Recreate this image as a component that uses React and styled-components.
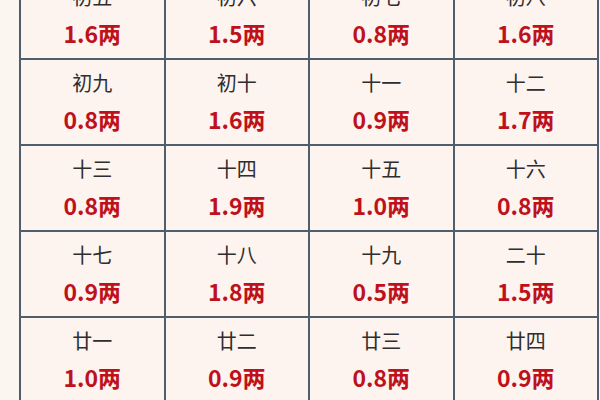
import styled, { createGlobalStyle } from 'styled-components';

const GlobalStyle = createGlobalStyle`
  html, body {
    margin: 0;
    padding: 0;
    background: #fcf6f0;
    overflow: hidden;
  }
`

const Page = styled.div`
  width: 600px;
  height: 400px;
  overflow: hidden;
  padding-left: 19px;
  box-sizing: border-box;
  font-family: "Noto Sans CJK SC", "Noto Sans", sans-serif;
`

const Grid = styled.div`
  margin-top: -28px;
  width: 576px;
  display: grid;
  grid-template-columns: repeat(4, 1fr);
  grid-auto-rows: 84px;
  gap: 2px;
  border: 2px solid #4f5e6c;
  background: #4f5e6c;
`

const Cell = styled.div`
  background: #fdf3ef;
  display: flex;
  flex-direction: column;
  align-items: center;
  padding-top: 8px;
  box-sizing: border-box;
`

const Day = styled.div`
  font-size: 20px;
  line-height: 30px;
  color: #2e2e2e;
`

const Weight = styled.div`
  margin-top: 6px;
  font-size: 23px;
  line-height: 30px;
  font-weight: 700;
  color: #be111b;
`

const data = [
  ['初五', '1.6'], ['初六', '1.5'], ['初七', '0.8'], ['初八', '1.6'],
  ['初九', '0.8'], ['初十', '1.6'], ['十一', '0.9'], ['十二', '1.7'],
  ['十三', '0.8'], ['十四', '1.9'], ['十五', '1.0'], ['十六', '0.8'],
  ['十七', '0.9'], ['十八', '1.8'], ['十九', '0.5'], ['二十', '1.5'],
  ['廿一', '1.0'], ['廿二', '0.9'], ['廿三', '0.8'], ['廿四', '0.9'],
]

function App() {
  return (
    <>
      <GlobalStyle />
      <Page>
        <Grid>
          {data.map(([day, w]) => (
            <Cell key={day}>
              <Day>{day}</Day>
              <Weight>{w}两</Weight>
            </Cell>
          ))}
        </Grid>
      </Page>
    </>
  );
}
export default App;
